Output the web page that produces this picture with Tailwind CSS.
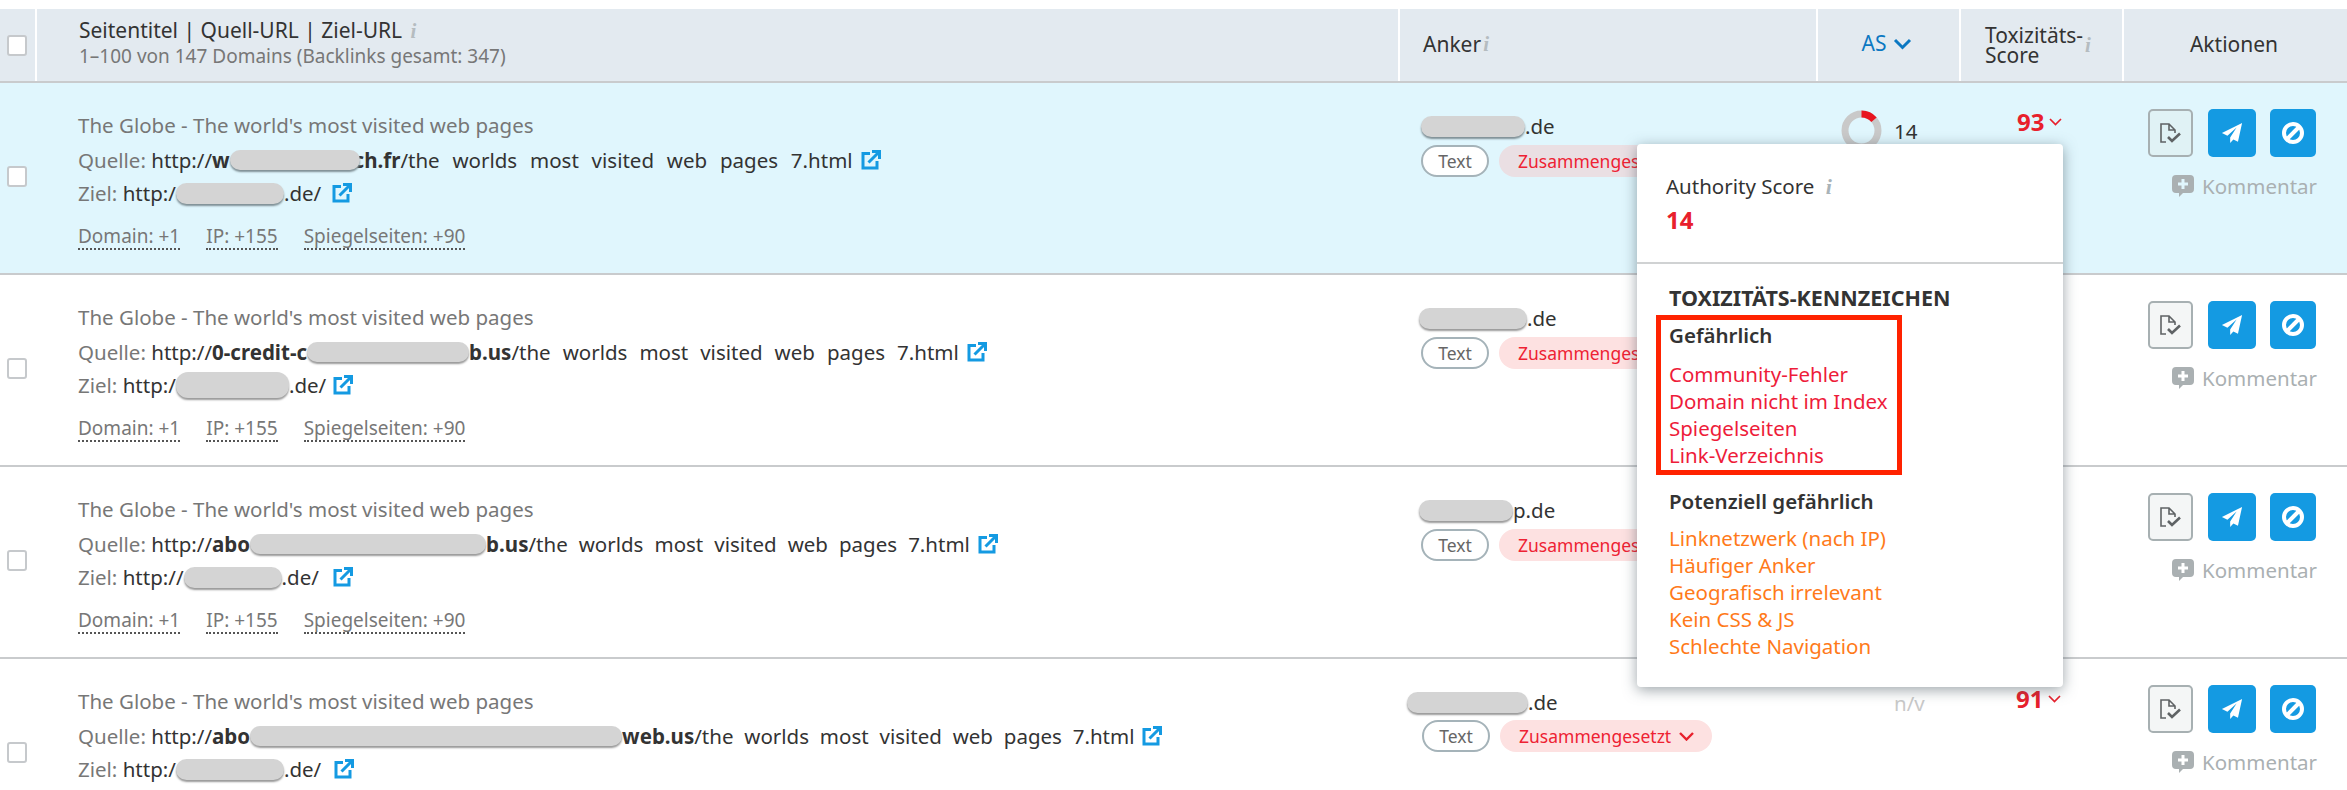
<!DOCTYPE html>
<html lang="de">
<head>
<meta charset="utf-8">
<script src="https://cdn.jsdelivr.net/npm/@tailwindcss/browser@4"></script>
</head>
<body class="bg-white font-['Noto_Sans',sans-serif] text-[20.5px] text-[#333]">
<div class="relative h-[790px] w-[2347px] overflow-hidden pt-[9px]">

  <!-- header -->
  <div class="flex h-[74px] border-b-2 border-[#c9cbcd]">
    <div class="flex w-[35px] items-center justify-center bg-[#e3eaf0] pr-[1px]"><span class="h-[21px] w-[20px] rounded-[3px] border-2 border-[#c6c9cc] bg-white"></span></div>
    <div class="ml-[2px] w-[1361px] bg-[#e3eaf0] pl-[42px] pt-[8px]">
      <div class="h-[27px] text-[21px] leading-[27px]">Seitentitel | Quell-URL | Ziel-URL <span class="ml-[3px] font-['Liberation_Serif',serif] font-bold text-[#b5bcc0] italic">i</span></div>
      <div class="h-[24px] text-[19px] leading-[24px] text-[#777]">1–100 von 147 Domains (Backlinks gesamt: 347)</div>
    </div>
    <div class="ml-[2px] flex w-[416px] items-center bg-[#e3eaf0] pl-[23px] text-[21px]">Anker<span class="ml-[2px] font-['Liberation_Serif',serif] font-bold text-[#b5bcc0] italic">i</span></div>
    <div class="ml-[2px] flex w-[141px] items-center justify-center gap-[7px] bg-[#e3eaf0] pb-[2px] pr-[3px] text-[21px] text-[#0b78c2]">AS
      <svg class="h-[12px] w-[19px]" viewBox="0 0 19 12" fill="none" stroke="#0b78c2" stroke-width="3"><path d="M2 2l7.500 7.500L17 2"/></svg>
    </div>
    <div class="ml-[2px] flex w-[161px] items-center bg-[#e3eaf0] pl-[24px] text-[21px] leading-[20px]"><span>Toxizitäts-<br>Score</span><span class="ml-[2px] font-['Liberation_Serif',serif] font-bold text-[#b5bcc0] italic">i</span></div>
    <div class="ml-[2px] flex flex-1 items-center justify-center bg-[#e3eaf0] pr-[3px] text-[21px]">Aktionen</div>
  </div>

  <!-- row 1 -->
  <div class="flex h-[192px] border-b-2 border-[#c9cbcd] bg-[#e0f6fd]">
    <div class="flex w-[37px] justify-center pr-[3px] pt-[83px]"><span class="h-[21px] w-[20px] rounded-[3px] border-2 border-[#c6c9cc] bg-white"></span></div>
    <div class="w-[1363px] pl-[41px] pt-[29px]">
      <div class="h-[26px] leading-[26px] text-[#777]">The Globe - The world's most visited web pages</div>
      <div class="mt-[9px] flex h-[26px] items-center leading-[26px] text-[#777]">Quelle:&nbsp;<span class="text-[#333]">http://<b>w</b></span><span class="z-10 -mr-[6px] h-[20px] w-[130px] shrink-0 rounded-full bg-[#d4d4d4] shadow-[0_2px_2px_#7f8f95]"></span><span class="text-[#333] [word-spacing:7.5px]"><b>ch.fr</b>/the worlds most visited web pages 7.html</span>
        <svg class="ml-[8px] h-[20px] w-[20px]" viewBox="0 0 20 20" fill="none" stroke="#149ae2" stroke-width="3"><path d="M9 3.500H2v14.500h14V11"/><path d="M7.500 12.500L17 3M11 1.500h7.500V9"/></svg>
      </div>
      <div class="mt-[7px] flex h-[26px] items-center leading-[26px] text-[#777]">Ziel:&nbsp;<span class="text-[#333]">http:/</span><span class="z-10 h-[21px] w-[108px] shrink-0 rounded-full bg-[#d4d4d4] shadow-[0_2px_2px_#7f8f95]"></span><span class="text-[#333]">.de/</span>
        <svg class="ml-[11px] h-[20px] w-[20px]" viewBox="0 0 20 20" fill="none" stroke="#149ae2" stroke-width="3"><path d="M9 3.500H2v14.500h14V11"/><path d="M7.500 12.500L17 3M11 1.500h7.500V9"/></svg>
      </div>
      <div class="mt-[18px] flex h-[26px] gap-[26px] text-[19px] leading-[24px] text-[#777]">
        <span class="border-b-2 border-dotted border-[#555]">Domain: +1</span><span class="border-b-2 border-dotted border-[#555]">IP: +155</span><span class="border-b-2 border-dotted border-[#555]">Spiegelseiten: +90</span>
      </div>
    </div>
    <div class="w-[418px] pl-[21px] pt-[30px]">
      <div class="flex h-[26px] items-center leading-[26px]"><span class="h-[21px] w-[104px] rounded-full bg-[#d4d4d4] shadow-[0_2px_2px_#7f8f95]"></span><span>.de</span></div>
      <div class="mt-[6px] flex gap-[10px]">
        <span class="flex h-[32px] w-[68px] items-center justify-center rounded-full border-2 border-[#a5b3b9] bg-white text-[17.5px] text-[#666]">Text</span>
        <span class="flex h-[32px] w-[212px] items-center gap-[8px] rounded-full bg-[#eadfe3] pl-[19px] text-[17.5px] text-[#ee2233]">Zusammengesetzt</span>
      </div>
    </div>
    <div class="flex w-[143px] items-start pl-[23px] pt-[27px]">
      <svg class="h-[41px] w-[41px]" viewBox="0 0 41 41" fill="none" stroke-width="7"><circle cx="20.500" cy="20.500" r="16.500" stroke="#c9c9c9"/><path d="M20.500 4a16.500 16.500 0 0 1 12.500 5.800" stroke="#e8141f"/></svg>
      <span class="ml-[12px] mt-[9px] leading-[24px]">14</span>
    </div>
    <div class="flex w-[163px] items-start gap-[5px] pl-[56px] pt-[26px]"><span class="text-[24px] font-bold leading-[26px] text-[#e8202c]">93</span><svg class="mt-[9px] h-[8px] w-[13px]" viewBox="0 0 13 8" fill="none" stroke="#e8202c" stroke-width="1.700"><path d="M1 1l5.500 5.500L12 1"/></svg></div>
    <div class="flex-1 pl-[24px] pt-[26px]">
      <div class="flex gap-[15px]">
        <span class="flex h-[48px] w-[45px] items-center justify-center rounded-[5px] border-2 border-[#a7b0b2] bg-[#e0f2f5]"><svg class="h-[20px] w-[22px]" viewBox="0 0 22 20" fill="none" stroke="#5f6365" stroke-width="1.600"><path d="M6 19H1V1h8l6 6v3M9 1v6h6"/><path d="M8 14l4 4 8-7.500" stroke-width="2.600"/></svg></span>
        <span class="flex h-[48px] w-[48px] items-center justify-center rounded-[5px] bg-[#149ae2]"><svg class="h-[22px] w-[24px]" viewBox="0 0 24 24" fill="#fff"><path d="M23 1L1 12l6 3 10-9-7 11 0 6 3.500-4 5 2.500z"/></svg></span>
        <span class="ml-[-1px] flex h-[48px] w-[46px] items-center justify-center rounded-[5px] bg-[#149ae2]"><svg class="h-[24px] w-[24px]" viewBox="0 0 24 24" fill="none" stroke="#fff" stroke-width="4"><circle cx="12" cy="12" r="9"/><path d="M18 6L6 18"/></svg></span>
      </div>
      <div class="mt-[16px] flex h-[26px] items-center justify-end pr-[30px] text-[#aab0b2]"><svg class="mr-[8px] h-[22px] w-[22px]" viewBox="0 0 22 22"><path fill="#aab0b2" d="M4 0h14a4 4 0 0 1 4 4v10a4 4 0 0 1-4 4h-7l-4 4v-4H4a4 4 0 0 1-4-4V4a4 4 0 0 1 4-4z"/><path stroke="#e0f6fd" stroke-width="3" d="M11 4v10M6 9h10"/></svg>Kommentar</div>
    </div>
  </div>

  <!-- row 2 -->
  <div class="flex h-[192px] border-b-2 border-[#c9cbcd]">
    <div class="flex w-[37px] justify-center pr-[3px] pt-[83px]"><span class="h-[21px] w-[20px] rounded-[3px] border-2 border-[#c6c9cc] bg-white"></span></div>
    <div class="w-[1363px] pl-[41px] pt-[29px]">
      <div class="h-[26px] leading-[26px] text-[#777]">The Globe - The world's most visited web pages</div>
      <div class="mt-[9px] flex h-[26px] items-center leading-[26px] text-[#777]">Quelle:&nbsp;<span class="text-[#333]">http://<b>0-credit-c</b></span><span class="z-10 h-[20px] w-[162px] shrink-0 rounded-full bg-[#d4d4d4] shadow-[0_2px_2px_#999]"></span><span class="text-[#333] [word-spacing:6.700px]"><b>b.us</b>/the worlds most visited web pages 7.html</span>
        <svg class="ml-[8px] h-[20px] w-[20px]" viewBox="0 0 20 20" fill="none" stroke="#149ae2" stroke-width="3"><path d="M9 3.500H2v14.500h14V11"/><path d="M7.500 12.500L17 3M11 1.500h7.500V9"/></svg>
      </div>
      <div class="mt-[7px] flex h-[26px] items-center leading-[26px] text-[#777]">Ziel:&nbsp;<span class="text-[#333]">http:/</span><span class="z-10 h-[26px] w-[113px] shrink-0 rounded-[12px] bg-[#d4d4d4] shadow-[0_2px_2px_#999]"></span><span class="text-[#333]">.de/</span>
        <svg class="ml-[7px] h-[20px] w-[20px]" viewBox="0 0 20 20" fill="none" stroke="#149ae2" stroke-width="3"><path d="M9 3.500H2v14.500h14V11"/><path d="M7.500 12.500L17 3M11 1.500h7.500V9"/></svg>
      </div>
      <div class="mt-[18px] flex h-[26px] gap-[26px] text-[19px] leading-[24px] text-[#777]">
        <span class="border-b-2 border-dotted border-[#555]">Domain: +1</span><span class="border-b-2 border-dotted border-[#555]">IP: +155</span><span class="border-b-2 border-dotted border-[#555]">Spiegelseiten: +90</span>
      </div>
    </div>
    <div class="w-[418px] pl-[19px] pt-[30px]">
      <div class="flex h-[26px] items-center leading-[26px]"><span class="h-[21px] w-[108px] rounded-full bg-[#d4d4d4] shadow-[0_2px_2px_#999]"></span><span>.de</span></div>
      <div class="ml-[2px] mt-[6px] flex gap-[10px]">
        <span class="flex h-[32px] w-[68px] items-center justify-center rounded-full border-2 border-[#a5b3b9] bg-white text-[17.5px] text-[#666]">Text</span>
        <span class="flex h-[32px] w-[212px] items-center gap-[8px] rounded-full bg-[#fde1e1] pl-[19px] text-[17.5px] text-[#ee2233]">Zusammengesetzt</span>
      </div>
    </div>
    <div class="w-[143px]"></div>
    <div class="w-[163px]"></div>
    <div class="flex-1 pl-[24px] pt-[26px]">
      <div class="flex gap-[15px]">
        <span class="flex h-[48px] w-[45px] items-center justify-center rounded-[5px] border-2 border-[#a7b0b2] bg-[#f4f6f6]"><svg class="h-[20px] w-[22px]" viewBox="0 0 22 20" fill="none" stroke="#5f6365" stroke-width="1.600"><path d="M6 19H1V1h8l6 6v3M9 1v6h6"/><path d="M8 14l4 4 8-7.500" stroke-width="2.600"/></svg></span>
        <span class="flex h-[48px] w-[48px] items-center justify-center rounded-[5px] bg-[#149ae2]"><svg class="h-[22px] w-[24px]" viewBox="0 0 24 24" fill="#fff"><path d="M23 1L1 12l6 3 10-9-7 11 0 6 3.500-4 5 2.500z"/></svg></span>
        <span class="ml-[-1px] flex h-[48px] w-[46px] items-center justify-center rounded-[5px] bg-[#149ae2]"><svg class="h-[24px] w-[24px]" viewBox="0 0 24 24" fill="none" stroke="#fff" stroke-width="4"><circle cx="12" cy="12" r="9"/><path d="M18 6L6 18"/></svg></span>
      </div>
      <div class="mt-[16px] flex h-[26px] items-center justify-end pr-[30px] text-[#aab0b2]"><svg class="mr-[8px] h-[22px] w-[22px]" viewBox="0 0 22 22"><path fill="#aab0b2" d="M4 0h14a4 4 0 0 1 4 4v10a4 4 0 0 1-4 4h-7l-4 4v-4H4a4 4 0 0 1-4-4V4a4 4 0 0 1 4-4z"/><path stroke="#fff" stroke-width="3" d="M11 4v10M6 9h10"/></svg>Kommentar</div>
    </div>
  </div>

  <!-- row 3 -->
  <div class="flex h-[192px] border-b-2 border-[#c9cbcd]">
    <div class="flex w-[37px] justify-center pr-[3px] pt-[83px]"><span class="h-[21px] w-[20px] rounded-[3px] border-2 border-[#c6c9cc] bg-white"></span></div>
    <div class="w-[1363px] pl-[41px] pt-[29px]">
      <div class="h-[26px] leading-[26px] text-[#777]">The Globe - The world's most visited web pages</div>
      <div class="mt-[9px] flex h-[26px] items-center leading-[26px] text-[#777]">Quelle:&nbsp;<span class="text-[#333]">http://<b>abo</b></span><span class="z-10 h-[20px] w-[236px] shrink-0 rounded-full bg-[#d4d4d4] shadow-[0_2px_2px_#999]"></span><span class="text-[#333] [word-spacing:5.700px]"><b>b.us</b>/the worlds most visited web pages 7.html</span>
        <svg class="ml-[8px] h-[20px] w-[20px]" viewBox="0 0 20 20" fill="none" stroke="#149ae2" stroke-width="3"><path d="M9 3.500H2v14.500h14V11"/><path d="M7.500 12.500L17 3M11 1.500h7.500V9"/></svg>
      </div>
      <div class="mt-[7px] flex h-[26px] items-center leading-[26px] text-[#777]">Ziel:&nbsp;<span class="text-[#333]">http://</span><span class="z-10 h-[21px] w-[98px] shrink-0 rounded-full bg-[#d4d4d4] shadow-[0_2px_2px_#999]"></span><span class="text-[#333]">.de/</span>
        <svg class="ml-[14px] h-[20px] w-[20px]" viewBox="0 0 20 20" fill="none" stroke="#149ae2" stroke-width="3"><path d="M9 3.500H2v14.500h14V11"/><path d="M7.500 12.500L17 3M11 1.500h7.500V9"/></svg>
      </div>
      <div class="mt-[18px] flex h-[26px] gap-[26px] text-[19px] leading-[24px] text-[#777]">
        <span class="border-b-2 border-dotted border-[#555]">Domain: +1</span><span class="border-b-2 border-dotted border-[#555]">IP: +155</span><span class="border-b-2 border-dotted border-[#555]">Spiegelseiten: +90</span>
      </div>
    </div>
    <div class="w-[418px] pl-[19px] pt-[30px]">
      <div class="flex h-[26px] items-center leading-[26px]"><span class="h-[21px] w-[94px] rounded-full bg-[#d4d4d4] shadow-[0_2px_2px_#999]"></span><span>p.de</span></div>
      <div class="ml-[2px] mt-[6px] flex gap-[10px]">
        <span class="flex h-[32px] w-[68px] items-center justify-center rounded-full border-2 border-[#a5b3b9] bg-white text-[17.5px] text-[#666]">Text</span>
        <span class="flex h-[32px] w-[212px] items-center gap-[8px] rounded-full bg-[#fde1e1] pl-[19px] text-[17.5px] text-[#ee2233]">Zusammengesetzt</span>
      </div>
    </div>
    <div class="w-[143px]"></div>
    <div class="w-[163px]"></div>
    <div class="flex-1 pl-[24px] pt-[26px]">
      <div class="flex gap-[15px]">
        <span class="flex h-[48px] w-[45px] items-center justify-center rounded-[5px] border-2 border-[#a7b0b2] bg-[#f4f6f6]"><svg class="h-[20px] w-[22px]" viewBox="0 0 22 20" fill="none" stroke="#5f6365" stroke-width="1.600"><path d="M6 19H1V1h8l6 6v3M9 1v6h6"/><path d="M8 14l4 4 8-7.500" stroke-width="2.600"/></svg></span>
        <span class="flex h-[48px] w-[48px] items-center justify-center rounded-[5px] bg-[#149ae2]"><svg class="h-[22px] w-[24px]" viewBox="0 0 24 24" fill="#fff"><path d="M23 1L1 12l6 3 10-9-7 11 0 6 3.500-4 5 2.500z"/></svg></span>
        <span class="ml-[-1px] flex h-[48px] w-[46px] items-center justify-center rounded-[5px] bg-[#149ae2]"><svg class="h-[24px] w-[24px]" viewBox="0 0 24 24" fill="none" stroke="#fff" stroke-width="4"><circle cx="12" cy="12" r="9"/><path d="M18 6L6 18"/></svg></span>
      </div>
      <div class="mt-[16px] flex h-[26px] items-center justify-end pr-[30px] text-[#aab0b2]"><svg class="mr-[8px] h-[22px] w-[22px]" viewBox="0 0 22 22"><path fill="#aab0b2" d="M4 0h14a4 4 0 0 1 4 4v10a4 4 0 0 1-4 4h-7l-4 4v-4H4a4 4 0 0 1-4-4V4a4 4 0 0 1 4-4z"/><path stroke="#fff" stroke-width="3" d="M11 4v10M6 9h10"/></svg>Kommentar</div>
    </div>
  </div>

  <!-- row 4 -->
  <div class="flex h-[192px]">
    <div class="flex w-[37px] justify-center pr-[3px] pt-[83px]"><span class="h-[21px] w-[20px] rounded-[3px] border-2 border-[#c6c9cc] bg-white"></span></div>
    <div class="w-[1363px] pl-[41px] pt-[29px]">
      <div class="h-[26px] leading-[26px] text-[#777]">The Globe - The world's most visited web pages</div>
      <div class="mt-[9px] flex h-[26px] items-center leading-[26px] text-[#777]">Quelle:&nbsp;<span class="text-[#333]">http://<b>abo</b></span><span class="z-10 h-[20px] w-[372px] shrink-0 rounded-full bg-[#d4d4d4] shadow-[0_2px_2px_#999]"></span><span class="text-[#333] [word-spacing:5.500px]"><b>web.us</b>/the worlds most visited web pages 7.html</span>
        <svg class="ml-[8px] h-[20px] w-[20px]" viewBox="0 0 20 20" fill="none" stroke="#149ae2" stroke-width="3"><path d="M9 3.500H2v14.500h14V11"/><path d="M7.500 12.500L17 3M11 1.500h7.500V9"/></svg>
      </div>
      <div class="mt-[7px] flex h-[26px] items-center leading-[26px] text-[#777]">Ziel:&nbsp;<span class="text-[#333]">http:/</span><span class="z-10 h-[21px] w-[108px] shrink-0 rounded-full bg-[#d4d4d4] shadow-[0_2px_2px_#999]"></span><span class="text-[#333]">.de/</span>
        <svg class="ml-[13px] h-[20px] w-[20px]" viewBox="0 0 20 20" fill="none" stroke="#149ae2" stroke-width="3"><path d="M9 3.500H2v14.500h14V11"/><path d="M7.500 12.500L17 3M11 1.500h7.500V9"/></svg>
      </div>
    </div>
    <div class="w-[418px] pl-[7px] pt-[30px]">
      <div class="flex h-[26px] items-center leading-[26px]"><span class="h-[21px] w-[121px] rounded-full bg-[#d4d4d4] shadow-[0_2px_2px_#999]"></span><span>.de</span></div>
      <div class="ml-[15px] mt-[5px] flex gap-[10px]">
        <span class="flex h-[32px] w-[68px] items-center justify-center rounded-full border-2 border-[#a5b3b9] bg-white text-[17.5px] text-[#666]">Text</span>
        <span class="flex h-[32px] w-[212px] items-center gap-[8px] rounded-full bg-[#fde1e1] pl-[19px] text-[17.5px] text-[#ee2233]">Zusammengesetzt<svg class="h-[9px] w-[15px]" viewBox="0 0 15 9" fill="none" stroke="#e8202c" stroke-width="2.400"><path d="M1 1l6.500 6.500L14 1"/></svg></span>
      </div>
    </div>
    <div class="w-[143px] pl-[76px] pt-[31px] leading-[26px] text-[#c9c9c9]">n/v</div>
    <div class="flex w-[163px] items-start gap-[5px] pl-[55px] pt-[27px]"><span class="text-[24px] font-bold leading-[26px] text-[#e8202c]">91</span><svg class="mt-[9px] h-[8px] w-[13px]" viewBox="0 0 13 8" fill="none" stroke="#e8202c" stroke-width="1.700"><path d="M1 1l5.500 5.500L12 1"/></svg></div>
    <div class="flex-1 pl-[24px] pt-[26px]">
      <div class="flex gap-[15px]">
        <span class="flex h-[48px] w-[45px] items-center justify-center rounded-[5px] border-2 border-[#a7b0b2] bg-[#f4f6f6]"><svg class="h-[20px] w-[22px]" viewBox="0 0 22 20" fill="none" stroke="#5f6365" stroke-width="1.600"><path d="M6 19H1V1h8l6 6v3M9 1v6h6"/><path d="M8 14l4 4 8-7.500" stroke-width="2.600"/></svg></span>
        <span class="flex h-[48px] w-[48px] items-center justify-center rounded-[5px] bg-[#149ae2]"><svg class="h-[22px] w-[24px]" viewBox="0 0 24 24" fill="#fff"><path d="M23 1L1 12l6 3 10-9-7 11 0 6 3.500-4 5 2.500z"/></svg></span>
        <span class="ml-[-1px] flex h-[48px] w-[46px] items-center justify-center rounded-[5px] bg-[#149ae2]"><svg class="h-[24px] w-[24px]" viewBox="0 0 24 24" fill="none" stroke="#fff" stroke-width="4"><circle cx="12" cy="12" r="9"/><path d="M18 6L6 18"/></svg></span>
      </div>
      <div class="mt-[16px] flex h-[26px] items-center justify-end pr-[30px] text-[#aab0b2]"><svg class="mr-[8px] h-[22px] w-[22px]" viewBox="0 0 22 22"><path fill="#aab0b2" d="M4 0h14a4 4 0 0 1 4 4v10a4 4 0 0 1-4 4h-7l-4 4v-4H4a4 4 0 0 1-4-4V4a4 4 0 0 1 4-4z"/><path stroke="#fff" stroke-width="3" d="M11 4v10M6 9h10"/></svg>Kommentar</div>
    </div>
  </div>

  <!-- popover -->
  <div class="absolute left-[1637px] top-[144px] z-20 h-[543px] w-[426px] rounded-[4px] bg-white shadow-[0_3px_14px_rgba(60,75,85,0.5)]">
    <div class="h-[120px] border-b-2 border-[#d0d2d3] pl-[29px] pt-[28px]">
      <div class="h-[28px] leading-[28px]">Authority Score <span class="ml-[6px] font-['Liberation_Serif',serif] text-[22px] font-bold text-[#a9b3b8] italic">i</span></div>
      <div class="mt-[6px] text-[24px] font-bold leading-[28px] text-[#e8202c]">14</div>
    </div>
    <div class="pl-[19px] pt-[20px]">
      <div class="ml-[13px] h-[28px] text-[21.5px] font-bold leading-[28px]">TOXIZITÄTS-KENNZEICHEN</div>
      <div class="mt-[3px] w-[246px] border-[5px] border-[#ff2200] pb-[1px] pl-[8px]">
        <div class="h-[30px] font-semibold leading-[30px]">Gefährlich</div>
        <div class="mt-[11px] leading-[27px] text-[#ee1c3a]">Community-Fehler<br>Domain nicht im Index<br>Spiegelseiten<br>Link-Verzeichnis</div>
      </div>
      <div class="ml-[13px] mt-[11px] h-[30px] font-semibold leading-[30px]">Potenziell gefährlich</div>
      <div class="ml-[13px] mt-[9px] leading-[27px] text-[#ff7a1a]">Linknetzwerk (nach IP)<br>Häufiger Anker<br>Geografisch irrelevant<br>Kein CSS &amp; JS<br>Schlechte Navigation</div>
    </div>
  </div>
</div>
</body>
</html>
